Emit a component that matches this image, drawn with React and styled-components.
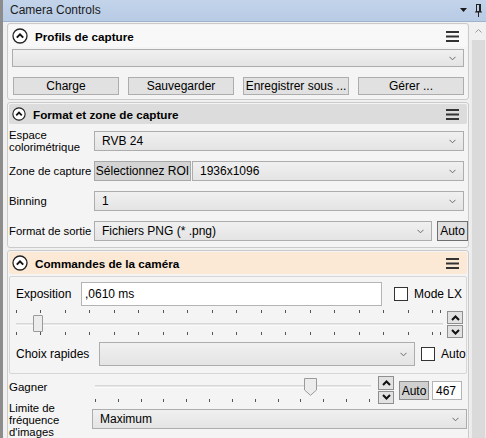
import React from 'react';
import styled, { createGlobalStyle } from 'styled-components';

const Global = createGlobalStyle`
  html, body { margin: 0; padding: 0; background: #f0f0f0; }
  body { font-family: "Liberation Sans", Arial, sans-serif; font-size: 12px; color: #000; }
  * { box-sizing: border-box; }
`;

const Window = styled.div`
  width: 486px;
  height: 438px;
  overflow: hidden;
  display: flex;
  flex-direction: column;
  background: #f0f0f0;
  border-left: 3px solid #8c8c8c;
`;

const TitleBar = styled.div`
  height: 22px;
  flex: none;
  display: flex;
  align-items: center;
  padding: 0 4px 1px 7px;
  background: linear-gradient(#c3d4ea, #b8cbe5);
  border-bottom: 1px solid #9fb3cf;
  color: #1b1b1b;
  font-size: 12px;
`;

const TitleText = styled.span`
  flex: 1;
`;

const TitleIcons = styled.div`
  display: flex;
  align-items: center;
  gap: 8px;
`;

const Body = styled.div`
  flex: 1;
  display: flex;
  min-height: 0;
`;

const Content = styled.div`
  flex: 1;
  padding: 1px 0 0 4px;
  display: flex;
  flex-direction: column;
  gap: 2px;
  min-width: 0;
`;

const ScrollBar = styled.div`
  width: 16px;
  flex: none;
  display: flex;
  flex-direction: column;
  background: #ececec;
  margin-left: 1px;
`;

const ScrollUp = styled.div`
  height: 18px;
  display: flex;
  align-items: center;
  justify-content: center;
  background: #f0f0f0;
`;

const ScrollThumb = styled.div`
  flex: 1;
  margin: 0 1px 0 2px;
  background: #dadada;
`;

const Panel = styled.section`
  flex: none;
  border: 1px solid #cacaca;
  border-radius: 3px;
  background: #f4f4f4;
  padding: 1px;
`;

const PanelHeader = styled.div`
  height: ${p => p.$h}px;
  display: flex;
  align-items: center;
  gap: 7px;
  padding: 0 8px 0 3px;
  background: ${p => p.$bg};
  border-radius: 2px;
  font-weight: bold;
  font-size: 11.7px;
  margin-bottom: ${p => p.$mb || 0}px;
`;

const HeaderTitle = styled.span`
  flex: 1;
`;

const ProfileBody = styled.div`
  padding: 0 3px 3px 3px;
  display: flex;
  flex-direction: column;
  gap: 10px;
  margin-top: 2px;
`;

const Select = styled.div`
  height: ${p => p.$h || 20}px;
  flex: ${p => (p.$w ? 'none' : '1 1 auto')};
  width: ${p => (p.$w ? `${p.$w}px` : 'auto')};
  min-width: 0;
  display: flex;
  align-items: center;
  padding: 0 7px 0 7px;
  background: linear-gradient(#f0f0f0, #e4e4e4);
  border: 1px solid #adadad;
  font-size: 12px;
  margin-left: ${p => p.$ml || 0}px;
  margin-top: ${p => p.$mt || 0}px;
`;

const SelectText = styled.span`
  flex: 1;
  white-space: nowrap;
  overflow: hidden;
`;

const ButtonGrid = styled.div`
  display: grid;
  grid-template-columns: repeat(4, 1fr);
  gap: 9px;
  padding-left: 1px;
`;

const Button = styled.div`
  height: ${p => p.$h || 18}px;
  width: ${p => (p.$w ? `${p.$w}px` : 'auto')};
  flex: none;
  display: flex;
  align-items: center;
  justify-content: center;
  background: ${p => p.$bg || '#e1e1e1'};
  border: 1px solid ${p => p.$bc || '#adadad'};
  font-size: 12px;
  white-space: nowrap;
  margin-left: ${p => p.$ml || 0}px;
  margin-top: ${p => p.$mt || 0}px;
`;

const FormBody = styled.div`
  display: flex;
  flex-direction: column;
  padding: 0 3px 0 0;
`;

const FormRow = styled.div`
  height: ${p => p.$h || 30}px;
  display: flex;
  align-items: ${p => p.$align || 'center'};
`;

const Label = styled.div`
  width: ${p => p.$w || 85}px;
  flex: none;
  font-size: 11.3px;
  line-height: 12px;
  white-space: nowrap;
  padding-left: ${p => p.$pl || 0}px;
  margin-top: ${p => p.$mt || 0}px;
`;

const CameraBody = styled.div`
  display: flex;
  flex-direction: column;
  padding: 1px 0 0 0;
`;

const GroupBox = styled.div`
  border: 1px solid #d6d6d6;
  border-radius: 2px;
  display: flex;
  flex-direction: column;
  padding-left: 6px;
`;

const ExpoRow = styled.div`
  height: 32px;
  padding-top: 5px;
  display: flex;
  align-items: flex-start;
`;

const ExpoLabel = styled.div`
  width: 65px;
  height: 24px;
  display: flex;
  align-items: center;
  font-size: 12px;
`;

const TextInput = styled.div`
  width: ${p => p.$w}px;
  height: ${p => p.$h}px;
  flex: none;
  display: flex;
  align-items: center;
  padding-left: 3px;
  background: #fff;
  border: 1px solid #b4b4b4;
  font-size: 12px;
  margin-left: ${p => p.$ml || 0}px;
  margin-top: ${p => p.$mt || 0}px;
`;

const CheckWrap = styled.div`
  display: flex;
  align-items: center;
  height: ${p => p.$h || 24}px;
  margin-left: ${p => p.$ml || 0}px;
  gap: 6px;
  font-size: 12px;
  white-space: nowrap;
`;

const Checkbox = styled.span`
  width: 14px;
  height: 14px;
  background: #fff;
  border: 1px solid #333;
  display: inline-block;
`;

const SliderRow = styled.div`
  height: 31px;
  display: flex;
  align-items: flex-start;
`;

const SliderBox = styled.div`
  position: relative;
  width: ${p => p.$w}px;
  height: ${p => p.$h}px;
  flex: none;
  margin-left: ${p => p.$ml || 0}px;
`;

const TickRow = styled.div`
  position: absolute;
  left: 0;
  top: ${p => p.$top}px;
  width: ${p => p.$w}px;
  height: 3px;
  display: flex;
  justify-content: space-between;
`;

const Tick = styled.span`
  width: 1px;
  height: 3px;
  background: #555;
`;

const EndTick = styled(Tick)`
  position: absolute;
  left: ${p => p.$left}px;
  top: ${p => p.$top}px;
`;

const Track = styled.div`
  position: absolute;
  left: 0;
  right: ${p => p.$right || 0}px;
  top: ${p => p.$top}px;
  height: 3px;
  background: #e6e6e6;
  border-top: 1px solid #d8d8d8;
  border-bottom: 1px solid #fbfbfb;
`;

const RectThumb = styled.div`
  position: absolute;
  left: ${p => p.$left}px;
  top: ${p => p.$top}px;
  width: 10px;
  height: 17px;
  background: #ececec;
  border: 1px solid #9a9a9a;
  border-radius: 1px;
`;

const PointThumb = styled.svg`
  position: absolute;
  left: ${p => p.$left}px;
  top: ${p => p.$top}px;
`;

const Spinner = styled.div`
  width: 16px;
  height: ${p => p.$h}px;
  flex: none;
  display: flex;
  flex-direction: column;
  gap: 1px;
  margin-left: ${p => p.$ml || 0}px;
  margin-top: ${p => p.$mt || 0}px;
`;

const SpinBtn = styled.div`
  flex: 1;
  display: flex;
  align-items: center;
  justify-content: center;
  background: #e2e2e2;
  border: 1px solid #8f8f8f;
`;

const QuickRow = styled.div`
  height: 33px;
  display: flex;
  align-items: flex-start;
  padding-top: 2px;
`;

const QuickLabel = styled.div`
  width: 83px;
  height: 24px;
  display: flex;
  align-items: center;
  font-size: 12px;
`;

const GainRow = styled.div`
  height: 30px;
  display: flex;
  align-items: flex-start;
  padding: 2px 0 0 0;
`;

const GainLabel = styled.div`
  width: 86px;
  padding-left: 0;
  margin-top: 5px;
  font-size: 11.5px;
`;

const Dropdown = ({ text, h, w, ml, mt }) => (
  <Select $h={h} $w={w} $ml={ml} $mt={mt}>
    <SelectText>{text}</SelectText>
    <svg width="7" height="5" viewBox="0 0 7 5">
      <polyline points="0.5,0.8 3.5,3.8 6.5,0.8" fill="none" stroke="#6a6a6a" strokeWidth="1" />
    </svg>
  </Select>
);

const CollapseIcon = ({ size = 16 }) => (
  <svg width={size} height={size} viewBox="0 0 16 16">
    <circle cx="8" cy="8" r="7" fill="#fff" stroke="#222" strokeWidth="1.3" />
    <polyline points="4.8,9.6 8,6.4 11.2,9.6" fill="none" stroke="#111" strokeWidth="2" />
  </svg>
);

const MenuIcon = () => (
  <svg width="13" height="11" viewBox="0 0 13 11">
    <rect x="0" y="0" width="13" height="2" fill="#333" />
    <rect x="0" y="4.5" width="13" height="2" fill="#333" />
    <rect x="0" y="9" width="13" height="2" fill="#333" />
  </svg>
);

const Chevron = ({ up }) => (
  <svg width="9" height="6" viewBox="0 0 9 6">
    <polyline
      points={up ? '1,5 4.5,1.5 8,5' : '1,1 4.5,4.5 8,1'}
      fill="none"
      stroke="#111"
      strokeWidth="2"
    />
  </svg>
);

const Ticks = ({ n, top, w }) => (
  <TickRow $top={top} $w={w}>
    {Array.from({ length: n }, (_, i) => (
      <Tick key={i} />
    ))}
  </TickRow>
);

const SpinPair = ({ h, ml, mt }) => (
  <Spinner $h={h} $ml={ml} $mt={mt}>
    <SpinBtn>
      <Chevron up />
    </SpinBtn>
    <SpinBtn>
      <Chevron />
    </SpinBtn>
  </Spinner>
);

export default function App() {
  return (
    <>
      <Global />
      <Window>
        <TitleBar>
          <TitleText>Camera Controls</TitleText>
          <TitleIcons>
            <svg width="7" height="4" viewBox="0 0 7 4">
              <polygon points="0,0 7,0 3.5,4" fill="#1b1b1b" />
            </svg>
            <svg width="7" height="13" viewBox="0 0 7 13">
              <rect x="1.5" y="0.5" width="4" height="7" fill="none" stroke="#222" />
              <rect x="4" y="1" width="1" height="6" fill="#222" />
              <rect x="0" y="7.5" width="7" height="1" fill="#222" />
              <rect x="3" y="8" width="1" height="5" fill="#222" />
            </svg>
          </TitleIcons>
        </TitleBar>
        <Body>
          <Content>
            <Panel>
              <PanelHeader $h={22} $bg="#f8f8f8">
                <CollapseIcon size={16} />
                <HeaderTitle>Profils de capture</HeaderTitle>
                <MenuIcon />
              </PanelHeader>
              <ProfileBody>
                <Dropdown text="" h={18} />
                <ButtonGrid>
                  <Button>Charge</Button>
                  <Button>Sauvegarder</Button>
                  <Button>Enregistrer sous ...</Button>
                  <Button>Gérer ...</Button>
                </ButtonGrid>
              </ProfileBody>
            </Panel>

            <Panel>
              <PanelHeader $h={20} $bg="#dcdcdc" $mb={2}>
                <CollapseIcon size={14} />
                <HeaderTitle>Format et zone de capture</HeaderTitle>
                <MenuIcon />
              </PanelHeader>
              <FormBody>
                <FormRow>
                  <Label>
                    Espace
                    <br />
                    colorimétrique
                  </Label>
                  <Dropdown text="RVB 24" />
                </FormRow>
                <FormRow>
                  <Label>Zone de capture</Label>
                  <Button $h={20} $w={97} $bg="#d4d4d4" $bc="#a8a8a8">
                    Sélectionnez ROI
                  </Button>
                  <Dropdown text="1936x1096" ml={1} />
                </FormRow>
                <FormRow>
                  <Label>Binning</Label>
                  <Dropdown text="1" />
                </FormRow>
                <FormRow>
                  <Label>Format de sortie</Label>
                  <Dropdown text="Fichiers PNG (* .png)" w={338} />
                  <Button $h={20} $w={31} $ml={5} $bc="#707070">
                    Auto
                  </Button>
                </FormRow>
              </FormBody>
            </Panel>

            <Panel>
              <PanelHeader $h={22} $bg="#fbe9d6" $mb={1}>
                <CollapseIcon size={16} />
                <HeaderTitle>Commandes de la caméra</HeaderTitle>
                <MenuIcon />
              </PanelHeader>
              <CameraBody>
                <GroupBox>
                  <ExpoRow>
                    <ExpoLabel>Exposition</ExpoLabel>
                    <TextInput $w={301} $h={24}>
                      ,0610 ms
                    </TextInput>
                    <CheckWrap $ml={12}>
                      <Checkbox />
                      Mode LX
                    </CheckWrap>
                  </ExpoRow>
                  <SliderRow>
                    <SliderBox $w={430} $h={28}>
                      <Ticks n={18} top={1} w={417} />
                      <EndTick $left={424} $top={1} />
                      <Track $top={14} $right={3} />
                      <RectThumb $left={17} $top={6} />
                      <Ticks n={18} top={23} w={417} />
                      <EndTick $left={424} $top={23} />
                    </SliderBox>
                    <SpinPair h={27} ml={1} mt={2} />
                  </SliderRow>
                  <QuickRow>
                    <QuickLabel>Choix rapides</QuickLabel>
                    <Dropdown text="" h={24} w={316} />
                    <CheckWrap $ml={6}>
                      <Checkbox />
                      Auto
                    </CheckWrap>
                  </QuickRow>
                </GroupBox>
                <GainRow>
                  <GainLabel>Gagner</GainLabel>
                  <SliderBox $w={276} $h={28}>
                    <Track $top={9} />
                    <PointThumb $left={209} $top={2} width="13" height="18" viewBox="0 0 13 18">
                      <polygon
                        points="0.5,0.5 12.5,0.5 12.5,12 6.5,17.3 0.5,12"
                        fill="#ececec"
                        stroke="#9a9a9a"
                        strokeWidth="1"
                      />
                    </PointThumb>
                    <Ticks n={13} top={23} w={275} />
                  </SliderBox>
                  <SpinPair h={28} ml={7} mt={0} />
                  <Button $h={19} $w={30} $ml={5} $mt={5} $bg="#d0d0d0" $bc="#8c8c8c">
                    Auto
                  </Button>
                  <TextInput $w={30} $h={19} $ml={3} $mt={5}>
                    467
                  </TextInput>
                </GainRow>
                <FormRow $h={40} $align="flex-start">
                  <Label $mt={-2}>
                    Limite de
                    <br />
                    fréquence
                    <br />
                    d'images
                  </Label>
                  <Dropdown text="Maximum" ml={-2} mt={5} />
                </FormRow>
              </CameraBody>
            </Panel>
          </Content>
          <ScrollBar>
            <ScrollUp>
              <svg width="7" height="4" viewBox="0 0 7 4">
                <polyline points="0.5,3.5 3.5,0.5 6.5,3.5" fill="none" stroke="#9a9a9a" strokeWidth="1" />
              </svg>
            </ScrollUp>
            <ScrollThumb />
          </ScrollBar>
        </Body>
      </Window>
    </>
  );
}
